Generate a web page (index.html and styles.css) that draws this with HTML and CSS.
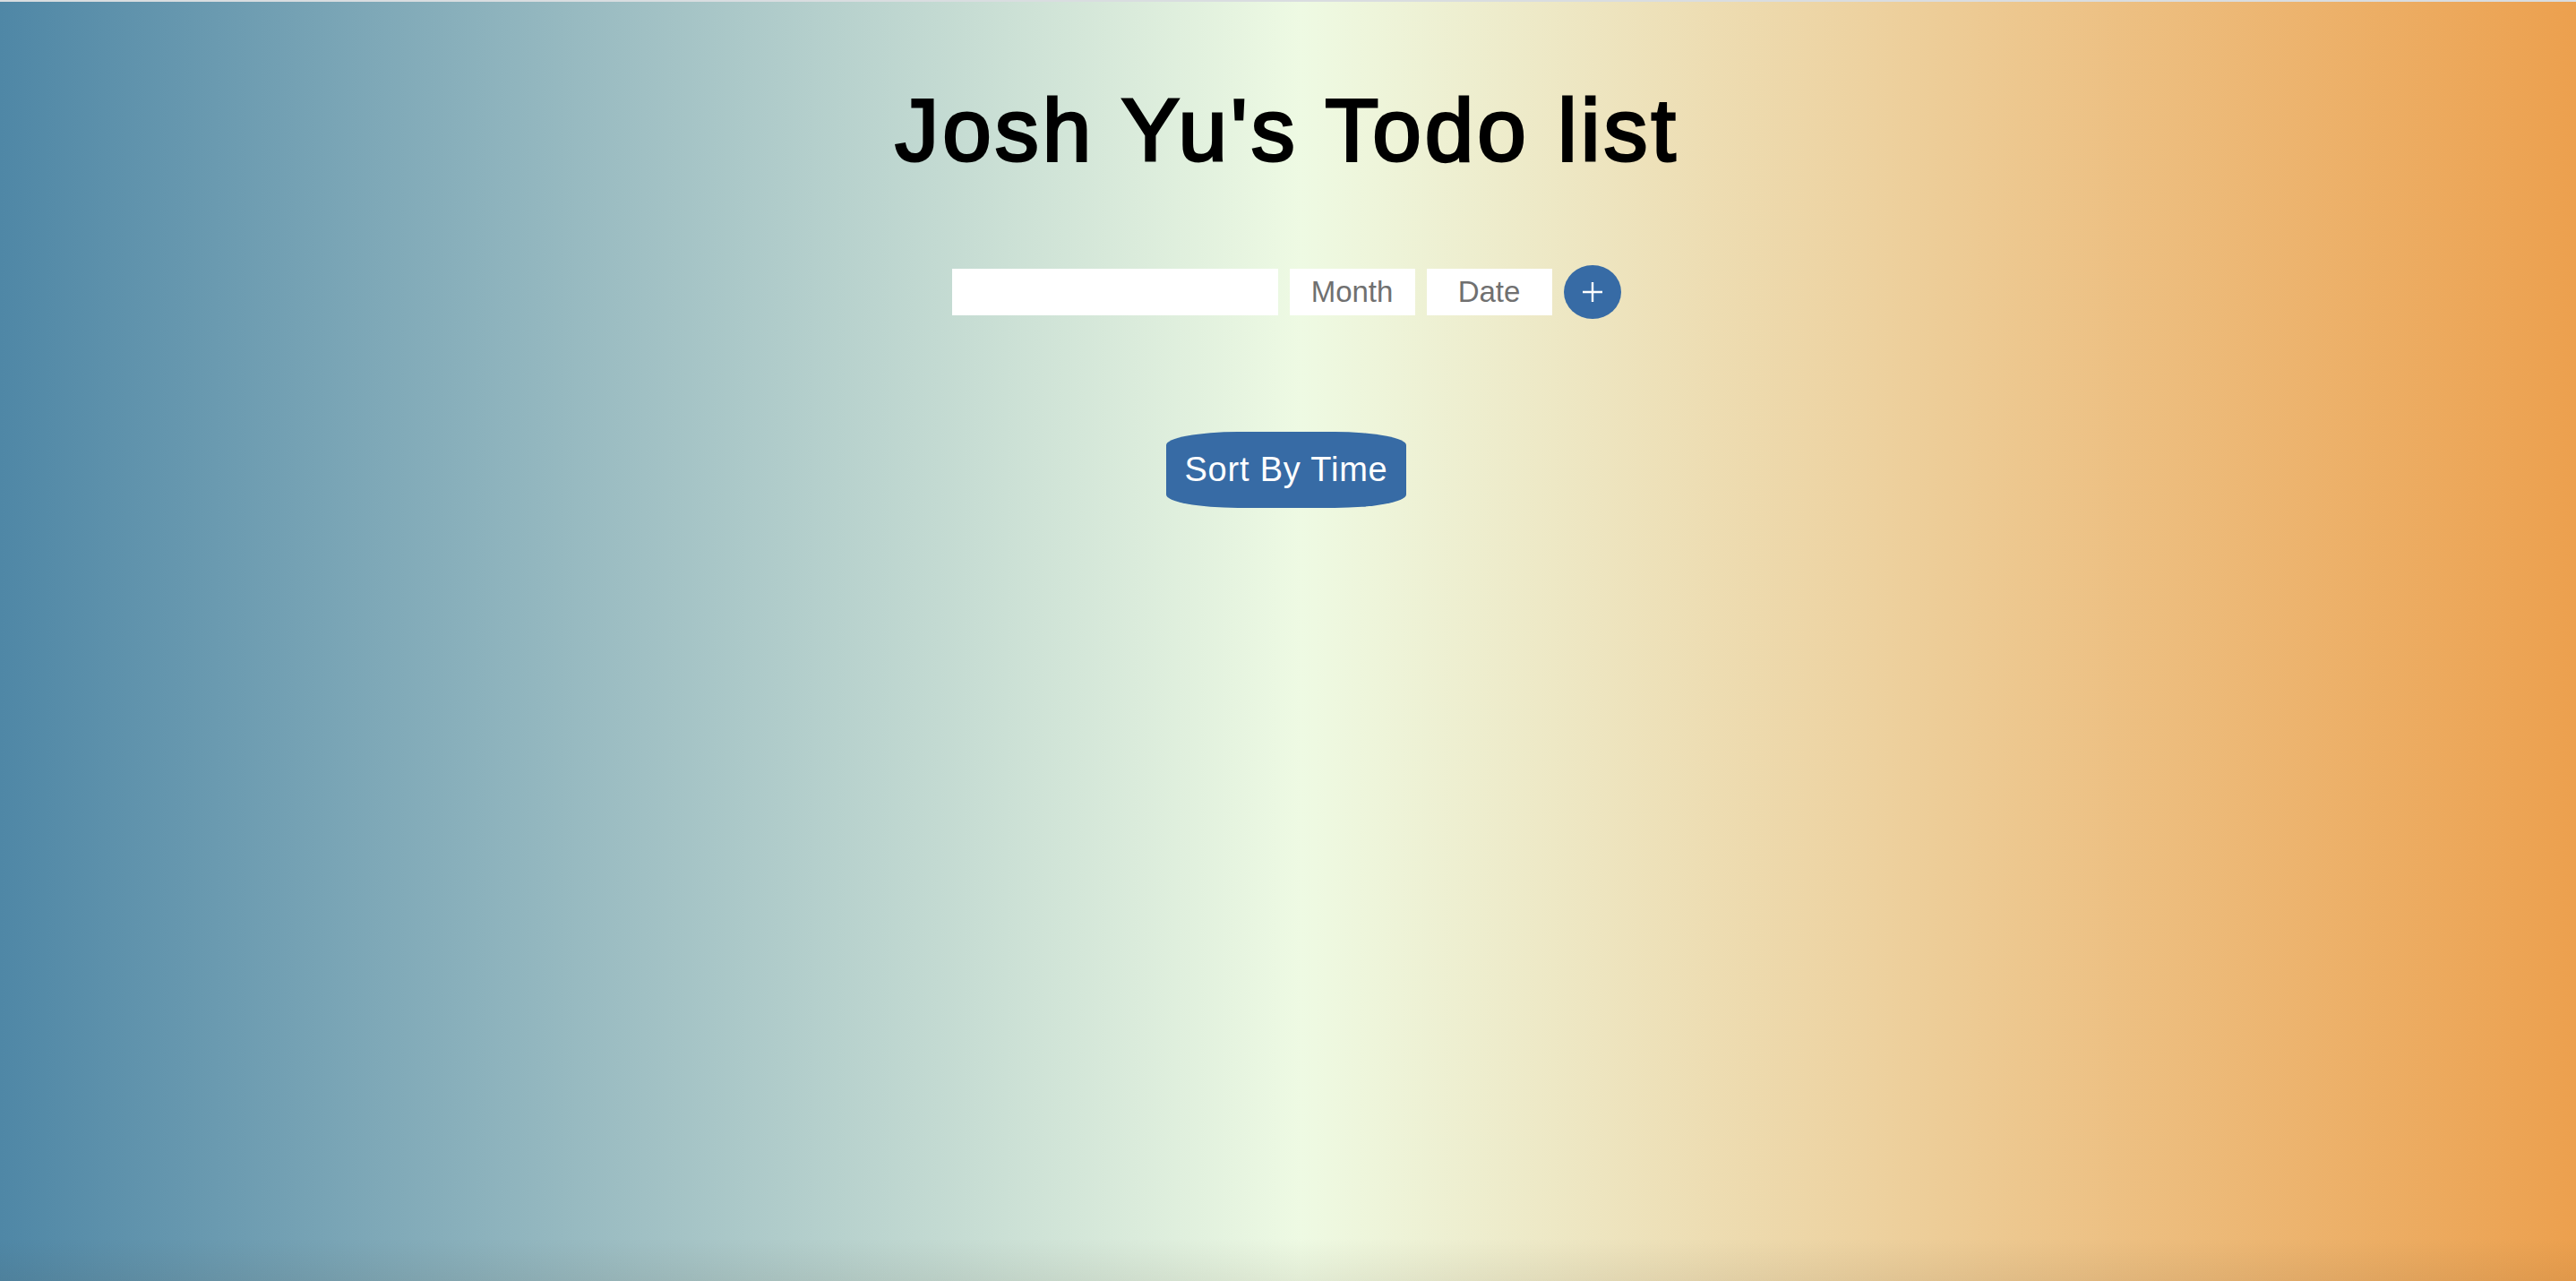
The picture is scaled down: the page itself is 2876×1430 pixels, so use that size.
FILE: index.html
```html
<!DOCTYPE html>
<html lang="en">
<head>
<meta charset="utf-8">
<title>Josh Yu's Todo list</title>
<link rel="stylesheet" href="styles.css">
</head>
<body>
<main class="app">
  <h1 class="title">Josh Yu's Todo list</h1>
  <form class="entry" onsubmit="return false">
    <input class="field field-text" type="text" aria-label="Todo">
    <input class="field field-small" type="text" placeholder="Month">
    <input class="field field-small" type="text" placeholder="Date">
    <button class="add" type="button" aria-label="Add">
      <svg width="22" height="22" viewBox="0 0 22 22"><path d="M11 0V22M0 11H22" stroke="#fff" stroke-width="2.4"/></svg>
    </button>
  </form>
  <button class="sort" type="button">Sort By Time</button>
</main>
</body>
</html>
```

FILE: styles.css
```css
html, body {
  margin: 0;
  padding: 0;
  height: 100%;
}
body {
  box-sizing: border-box;
  border-top: 2px solid #d9dde0;
  min-height: 100vh;
  font-family: "Liberation Sans", Arial, sans-serif;
  background:
    linear-gradient(to bottom, rgba(0,0,0,0) calc(100% - 48px), rgba(60,40,20,0.07) 100%),
    linear-gradient(to right, #4f87a6 0%, #a0c0c4 25%, #eefae3 50.5%, #edcd98 75%, #eca04e 100%);
}
.app {
  display: flex;
  flex-direction: column;
  align-items: center;
}
.title {
  margin: 94px 0 0;
  font-size: 98px;
  line-height: 98px;
  font-weight: normal;
  letter-spacing: 4px;
  -webkit-text-stroke: 3px #000;
  paint-order: stroke fill;
  color: #000;
  transform: translateX(-1px);
}
.entry {
  display: flex;
  align-items: center;
  gap: 13px;
  margin-top: 102px;
  transform: translateX(-2px);
}
.field {
  box-sizing: border-box;
  height: 52px;
  border: none;
  outline: none;
  padding: 0;
  background: #fff;
  font-family: "Liberation Sans", Arial, sans-serif;
  font-size: 33px;
  color: #333;
}
.field::placeholder {
  color: #707070;
}
.field-text {
  width: 364px;
}
.field-small {
  width: 140px;
  text-align: center;
}
.add {
  width: 64px;
  height: 60px;
  border: none;
  border-radius: 50%;
  background: #376ba5;
  padding: 0;
  display: flex;
  align-items: center;
  justify-content: center;
}
.sort {
  margin-top: 126px;
  width: 268px;
  height: 85px;
  border: none;
  border-radius: 80px / 15px;
  background: #376ba5;
  color: #fff;
  font-family: "Liberation Sans", Arial, sans-serif;
  font-size: 38px;
  letter-spacing: 0.8px;
  padding: 0;
  transform: translateX(-2px);
}
```
